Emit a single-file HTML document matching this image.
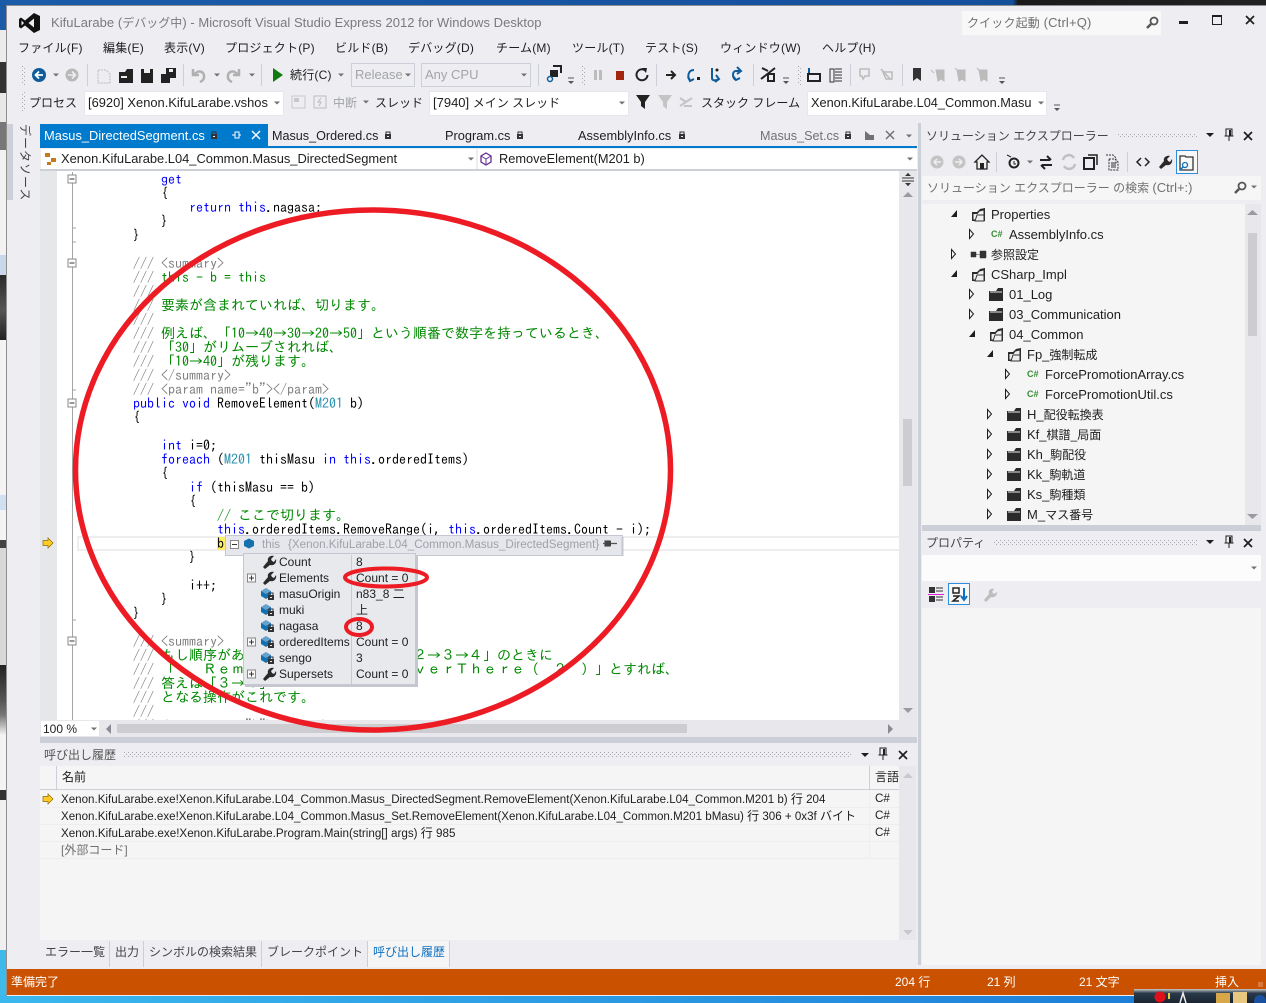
<!DOCTYPE html>
<html lang="ja"><head><meta charset="utf-8"><title>Visual Studio</title>
<style>
html,body{margin:0;padding:0}
body{width:1266px;height:1003px;overflow:hidden;position:relative;background:#eeeef2;font-family:"Liberation Sans","Noto Sans CJK JP",sans-serif;font-size:12px;color:#1e1e1e}
.b{position:absolute}
.t{position:absolute;white-space:nowrap;line-height:16px;font-size:12px}
.l{font-size:13px}
.l i{font-size:12px;font-style:normal}
.m{font-size:12.8px}
.m i{font-size:12px;font-style:normal}
.s{font-size:11.65px}
.s i{font-size:12px;font-style:normal}
.n{letter-spacing:.2px}
.g{color:#717171}
.d{color:#a2a4a5}
.w{color:#fff}
pre{position:absolute;left:77px;top:172px;margin:0;font:14px/14px "IPAGothic","Liberation Mono",monospace;color:#000;height:548px;width:822px;overflow:hidden}
pre b{font-weight:normal;color:#00f}
pre u{text-decoration:none;color:#080}
pre s{text-decoration:none;color:#808080}
pre em{font-style:normal;color:#2b91af}
svg{position:absolute;left:0;top:0}
.v{position:absolute;left:18px;top:124px;writing-mode:vertical-rl;text-orientation:sideways;line-height:14px;font-size:12px;letter-spacing:1px;color:#444}
.c{font:bold 9px/12px 'Liberation Sans',sans-serif;color:#388a34}
</style></head><body>
<!-- desktop -->
<div class="b" style="left:0;top:0;width:1266px;height:5px;background:linear-gradient(90deg,#1a5ca8,#144f9c 80%,#1a1a1a 80.4%,#222)"></div>
<div class="b" style="left:0;top:0;width:6px;height:1003px;background:linear-gradient(180deg,#1b5aa6 0,#1b5aa6 30px,#ececec 30px,#ececec 62px,#333 62px,#333 93px,#e8e8e8 93px,#e8e8e8 122px,#777 122px,#777 150px,#f2f2f2 150px,#f2f2f2 255px,#c8d8ea 255px,#c8d8ea 275px,#2a2a2a 275px,#555 310px,#222 340px,#f4f4f4 340px,#f4f4f4 495px,#d0e0f0 495px,#d0e0f0 510px,#f4f4f4 510px,#f4f4f4 540px,#444 540px,#444 548px,#d8d8d8 548px,#d8d8d8 665px,#222 665px,#555 700px,#777 715px,#f4f4f4 735px,#f4f4f4 790px,#333 790px,#333 800px,#f0f0f0 800px,#f0f0f0 950px,#3fb8ea 950px,#3fb8ea 1003px)"></div>
<div class="b" style="left:0;top:995px;width:1266px;height:8px;background:linear-gradient(90deg,#3ab8ee,#1a78d6)"></div>
<!-- window -->
<div class="b" style="left:6px;top:5px;width:1260px;height:991px;background:#eeeef2;border-left:1px solid #8f8f8f;border-top:1px solid #8f8f8f;box-sizing:border-box"></div>
<!-- title -->
<div class="t l g" style="left:51px;top:15px;color:#7a7a7a;letter-spacing:.03px"><span>KifuLarabe (<i>デバッグ中</i>) - Microsoft Visual Studio Express 2012 for Windows Desktop</span></div>
<div class="b" style="left:962px;top:11px;width:199px;height:24px;background:#f8f8f9"></div>
<div class="t l g" style="left:967px;top:15px;letter-spacing:.15px"><i>クイック起動</i> (Ctrl+Q)</div>
<!-- menu -->
<div class="t n" style="left:18px;top:40px">ファイル(F)</div><div class="t n" style="left:103px;top:40px">編集(E)</div><div class="t n" style="left:164px;top:40px">表示(V)</div><div class="t n" style="left:225px;top:40px">プロジェクト(P)</div><div class="t n" style="left:335px;top:40px">ビルド(B)</div><div class="t n" style="left:408px;top:40px">デバッグ(D)</div><div class="t n" style="left:496px;top:40px">チーム(M)</div><div class="t n" style="left:572px;top:40px">ツール(T)</div><div class="t n" style="left:645px;top:40px">テスト(S)</div><div class="t n" style="left:720px;top:40px">ウィンドウ(W)</div><div class="t n" style="left:822px;top:40px">ヘルプ(H)</div>
<!-- toolbar combos -->
<div class="t n" style="left:290px;top:67px">続行(C)</div>
<div class="b" style="left:351px;top:63px;width:62px;height:22px;border:1px solid #ccced8"></div><div class="t l d" style="left:355px;top:67px">Release</div>
<div class="b" style="left:421px;top:63px;width:108px;height:22px;border:1px solid #ccced8"></div><div class="t l d" style="left:425px;top:67px">Any CPU</div>
<div class="t" style="left:29px;top:95px">プロセス</div>
<div class="b" style="left:84px;top:91px;width:198px;height:23px;background:#fff;border:1px solid #e6e6ec"></div><div class="t m" style="left:88px;top:95px;font-size:12.9px">[6920] Xenon.KifuLarabe.vshos</div>
<div class="t d" style="left:333px;top:95px">中断</div><div class="t" style="left:375px;top:95px">スレッド</div>
<div class="b" style="left:429px;top:91px;width:198px;height:23px;background:#fff;border:1px solid #e6e6ec"></div><div class="t l" style="left:433px;top:95px">[7940] <i>メイン スレッド</i></div>
<div class="t" style="left:701px;top:95px">スタック フレーム</div>
<div class="b" style="left:807px;top:91px;width:238px;height:23px;background:#fff;border:1px solid #e6e6ec"></div><div class="t" style="left:811px;top:95px;font-size:12.75px">Xenon.KifuLarabe.L04_Common.Masu</div>
<!-- editor tabs -->
<div class="b" style="left:7px;top:124px;width:6px;height:76px;background:#ccced8"></div>
<div class="v">データソース</div>
<div class="b" style="left:40px;top:124px;width:228px;height:23px;background:#007acc"></div>
<div class="b" style="left:40px;top:146px;width:877px;height:2px;background:#007acc"></div>
<div class="t m w" style="left:44px;top:128px;font-size:12.87px">Masus_DirectedSegment.cs</div>
<div class="t m" style="left:272px;top:128px;font-size:12.6px">Masus_Ordered.cs</div>
<div class="t m" style="left:445px;top:128px">Program.cs</div>
<div class="t m" style="left:578px;top:128px">AssemblyInfo.cs</div>
<div class="t m g" style="left:760px;top:128px;font-size:12.6px">Masus_Set.cs</div>
<!-- nav bar -->
<div class="b" style="left:41px;top:149px;width:435px;height:20px;background:#fff"></div>
<div class="b" style="left:478px;top:149px;width:439px;height:20px;background:#fff"></div>
<div class="b" style="left:40px;top:169px;width:877px;height:2px;background:#ccced8"></div>
<div class="t m" style="left:61px;top:151px;font-size:12.9px">Xenon.KifuLarabe.L04_Common.Masus_DirectedSegment</div>
<div class="t m" style="left:499px;top:151px">RemoveElement(M201 b)</div>
<!-- editor -->
<div class="b" style="left:40px;top:171px;width:859px;height:549px;background:#fff"></div>
<div class="b" style="left:40px;top:171px;width:17px;height:549px;background:#e6e7e8"></div>
<div class="b" style="left:72px;top:172px;width:1px;height:548px;background:#a5a5a5"></div>
<div class="b" style="left:77px;top:536px;width:820px;height:11px;border:2px solid #eeeeee"></div>
<div class="b" style="left:217px;top:537px;width:8px;height:13px;background:#ffee62"></div>
<pre>            <b>get</b>
            {
                <b>return</b> <b>this</b>.nagasa;
            }
        }

        <s>///</s> <s>&lt;summary&gt;</s>
        <s>///</s> <u>this - b = this</u>
        <s>///</s>
        <s>///</s> <u>要素が含まれていれば、切ります。</u>
        <s>///</s>
        <s>///</s> <u>例えば、「10→40→30→20→50」という順番で数字を持っているとき、</u>
        <s>///</s> <u>「30」がリムーブされれば、</u>
        <s>///</s> <u>「10→40」が残ります。</u>
        <s>///</s> <s>&lt;/summary&gt;</s>
        <s>///</s> <s>&lt;param name="b"&gt;&lt;/param&gt;</s>
        <b>public</b> <b>void</b> RemoveElement(<em>M201</em> b)
        {

            <b>int</b> i=0;
            <b>foreach</b> (<em>M201</em> thisMasu <b>in</b> <b>this</b>.orderedItems)
            {
                <b>if</b> (thisMasu == b)
                {
                    <u>// ここで切ります。</u>
                    <b>this</b>.orderedItems.RemoveRange(i, <b>this</b>.orderedItems.Count - i);
                    b
                }

                i++;
            }
        }

        <s>///</s> <s>&lt;summary&gt;</s>
        <s>///</s> <u>もし順序があ　　　　　　　　　　　　２→３→４」のときに</u>
        <s>///</s> <u>「　　Ｒｅｍ　　　　　　　　　　　　ｖｅｒＴｈｅｒｅ（　２　）」とすれば、</u>
        <s>///</s> <u>答えは「３→４」</u>
        <s>///</s> <u>となる操作がこれです。</u>
        <s>///</s>
        <s>///</s> <s>&lt;param name="b"&gt;&lt;/param&gt;</s></pre>
<!-- editor scrollbars -->
<div class="b" style="left:899px;top:171px;width:18px;height:549px;background:#e8e8ec"></div>
<div class="b" style="left:903px;top:419px;width:9px;height:67px;background:#cdcdd1"></div>
<div class="b" style="left:40px;top:720px;width:877px;height:17px;background:#e8e8ec"></div>
<div class="b" style="left:41px;top:721px;width:58px;height:15px;background:#fff"></div>
<div class="t" style="left:43px;top:721px">100 %</div>
<div class="b" style="left:117px;top:724px;width:570px;height:9px;background:#cdcdd1"></div>
<div class="b" style="left:40px;top:737px;width:877px;height:6px;background:#ccced8"></div>
<div class="b" style="left:918px;top:123px;width:3px;height:842px;background:#ccced8"></div>
<!-- call stack -->
<div class="t g" style="left:44px;top:747px;color:#555">呼び出し履歴</div>
<div class="b" style="left:40px;top:766px;width:859px;height:174px;background:#f5f5f5"></div>
<div class="b" style="left:899px;top:766px;width:17px;height:174px;background:#e8e8ec"></div>
<div class="b" style="left:40px;top:789px;width:859px;height:1px;background:#ccced8"></div>
<div class="b" style="left:56px;top:766px;width:1px;height:23px;background:#ccced8"></div>
<div class="b" style="left:869px;top:766px;width:1px;height:23px;background:#ccced8"></div>
<div class="b" style="left:40px;top:807px;width:859px;height:1px;background:#eee"></div>
<div class="b" style="left:40px;top:824px;width:859px;height:1px;background:#eee"></div>
<div class="b" style="left:40px;top:841px;width:859px;height:1px;background:#eee"></div>
<div class="b" style="left:40px;top:858px;width:859px;height:1px;background:#eee"></div>
<div class="b" style="left:869px;top:790px;width:1px;height:68px;background:#eee"></div>
<div class="t" style="left:62px;top:769px">名前</div><div class="t" style="left:875px;top:769px">言語</div>
<div class="t s" style="left:61px;top:791px;font-size:11.58px">Xenon.KifuLarabe.exe!Xenon.KifuLarabe.L04_Common.Masus_DirectedSegment.RemoveElement(Xenon.KifuLarabe.L04_Common.M201 b) <i>行</i> 204</div>
<div class="t s" style="left:61px;top:808px;font-size:11.58px">Xenon.KifuLarabe.exe!Xenon.KifuLarabe.L04_Common.Masus_Set.RemoveElement(Xenon.KifuLarabe.L04_Common.M201 bMasu) <i>行</i> 306 + 0x3f <i>バイト</i></div>
<div class="t s" style="left:61px;top:825px">Xenon.KifuLarabe.exe!Xenon.KifuLarabe.Program.Main(string[] args) <i>行</i> 985</div>
<div class="t g" style="left:61px;top:842px">[外部コード]</div>
<div class="t s" style="left:875px;top:791px">C#</div><div class="t s" style="left:875px;top:808px">C#</div><div class="t s" style="left:875px;top:825px">C#</div>
<!-- bottom tabs -->
<div class="b" style="left:368px;top:941px;width:81px;height:26px;background:#f5f5f5"></div>
<div class="t" style="left:45px;top:944px;color:#444">エラー一覧</div><div class="t" style="left:115px;top:944px;color:#444">出力</div><div class="t" style="left:149px;top:944px;color:#444">シンボルの検索結果</div><div class="t" style="left:267px;top:944px;color:#444">ブレークポイント</div><div class="t" style="left:373px;top:944px;color:#0e70c0">呼び出し履歴</div>
<div class="b" style="left:109px;top:941px;width:1px;height:26px;background:#ccced8"></div><div class="b" style="left:143px;top:941px;width:1px;height:26px;background:#ccced8"></div><div class="b" style="left:261px;top:941px;width:1px;height:26px;background:#ccced8"></div><div class="b" style="left:367px;top:941px;width:1px;height:26px;background:#ccced8"></div><div class="b" style="left:449px;top:941px;width:1px;height:26px;background:#ccced8"></div>
<!-- solution explorer -->
<div class="t" style="left:926px;top:128px;color:#444">ソリューション エクスプローラー</div>
<div class="b" style="left:1176px;top:150px;width:20px;height:22px;border:1px solid #2d8fdc;background:#f8f8f9"></div>
<div class="b" style="left:922px;top:176px;width:339px;height:24px;background:#f6f6f6"></div>
<div class="t g" style="left:927px;top:180px">ソリューション エクスプローラー の検索 <span class="l">(Ctrl+:)</span></div>
<div class="b" style="left:922px;top:204px;width:323px;height:321px;background:#f5f5f5"></div>
<div class="b" style="left:1245px;top:204px;width:16px;height:321px;background:#e8e8ec"></div>
<div class="b" style="left:1248px;top:233px;width:9px;height:103px;background:#cdcdd1"></div>
<div class="b" style="left:922px;top:525px;width:339px;height:6px;background:#ccced8"></div>
<div class="t l" style="left:991px;top:207px">Properties</div>
<div class="t l" style="left:1009px;top:227px">AssemblyInfo.cs</div>
<div class="t" style="left:991px;top:247px">参照設定</div>
<div class="t l" style="left:991px;top:267px">CSharp_Impl</div>
<div class="t l" style="left:1009px;top:287px">01_Log</div>
<div class="t l" style="left:1009px;top:307px">03_Communication</div>
<div class="t l" style="left:1009px;top:327px">04_Common</div>
<div class="t l" style="left:1027px;top:347px">Fp_<i>強制転成</i></div>
<div class="t l" style="left:1045px;top:367px">ForcePromotionArray.cs</div>
<div class="t l" style="left:1045px;top:387px">ForcePromotionUtil.cs</div>
<div class="t l" style="left:1027px;top:407px">H_<i>配役転換表</i></div>
<div class="t l" style="left:1027px;top:427px">Kf_<i>棋譜_局面</i></div>
<div class="t l" style="left:1027px;top:447px">Kh_<i>駒配役</i></div>
<div class="t l" style="left:1027px;top:467px">Kk_<i>駒軌道</i></div>
<div class="t l" style="left:1027px;top:487px">Ks_<i>駒種類</i></div>
<div class="t l" style="left:1027px;top:507px">M_<i>マス番号</i></div>
<div class="t c" style="left:991px;top:228px">C#</div>
<div class="t c" style="left:1027px;top:368px">C#</div>
<div class="t c" style="left:1027px;top:388px">C#</div>
<!-- properties -->
<div class="t" style="left:926px;top:535px;color:#444">プロパティ</div>
<div class="b" style="left:922px;top:555px;width:339px;height:26px;background:#fcfcfc"></div>
<div class="b" style="left:922px;top:608px;width:339px;height:357px;background:#f5f5f5"></div>
<div class="b" style="left:948px;top:583px;width:22px;height:22px;border:1px solid #2d8fdc;box-sizing:border-box;background:#f8f8f9"></div>
<!-- status -->
<div class="b" style="left:7px;top:969px;width:1259px;height:26px;background:#ca5100"></div>
<div class="t w" style="left:11px;top:974px">準備完了</div>
<div class="t w" style="left:895px;top:974px">204 行</div><div class="t w" style="left:987px;top:974px">21 列</div><div class="t w" style="left:1079px;top:974px">21 文字</div><div class="t w" style="left:1215px;top:974px">挿入</div>
<div class="b" style="left:1134px;top:989px;width:132px;height:14px;background:linear-gradient(#c8c8c8,#2a3a4a 30%,#1a2430)"></div>
<!-- icons -->
<svg width="1266" height="1003" viewBox="0 0 1266 1003" xmlns="http://www.w3.org/2000/svg">
<defs>
<pattern id="dots" width="4" height="4" patternUnits="userSpaceOnUse"><rect width="1" height="1" fill="#a8a8b0"/><rect x="2" y="2" width="1" height="1" fill="#a8a8b0"/></pattern>
<symbol id="fc" overflow="visible"><path d="M0 3h7l2-3h5v13H0z" fill="#2b2b2b"/><path d="M1 4h12" stroke="#e8e8e8" fill="none"/></symbol>
<symbol id="fo" overflow="visible"><path d="M0 4h5l3-3 5-1v13H0z" fill="#2b2b2b"/><path d="M1.500 6h4l2-2.500 4-1V11.500h-10z" fill="#eeeeee"/><path d="M5 7h7v6H3z" fill="#eeeeee" stroke="#333"/></symbol>
<symbol id="ex" overflow="visible"><path d="M.5-4.500L4.500 0 .5 4.500z" fill="#f5f5f5" stroke="#1e1e1e"/></symbol>
<symbol id="ec" overflow="visible"><path d="M6-4V3H0z" fill="#1e1e1e"/></symbol>
<symbol id="dn" overflow="visible"><path d="M-3-1.500H3L0 1.500z" fill="#717171"/></symbol>
<symbol id="dk" overflow="visible"><path d="M-4-2H4L0 2z" fill="#1e1e1e"/></symbol>
<symbol id="of" overflow="visible"><path d="M-3-3H3" stroke="#555" fill="none"/><path d="M-3 0H3L0 3z" fill="#555"/></symbol>
<symbol id="lk" overflow="visible"><rect x="-3" y="-1" width="6" height="5" fill="#333"/><path d="M-2-1v-2h4v2" fill="none" stroke="#333"/><rect x="-1" y="1" width="2" height="1" fill="#eee"/></symbol>
<symbol id="pin" overflow="visible"><path d="M-3-6H3V1H-3zM-4.500 1H4.500M0 1V6" stroke="#1e1e1e" fill="none"/><rect x="0" y="-5" width="2" height="6" fill="#1e1e1e"/></symbol>
<symbol id="cl" overflow="visible"><path d="M-4-4L4 4M4-4L-4 4" stroke="#1e1e1e" stroke-width="1.700" fill="none"/></symbol>
<symbol id="gl" overflow="visible"><circle cx="2" cy="-2" r="3.500" fill="none" stroke="#555" stroke-width="1.800"/><path d="M-1 1L-5 5" stroke="#555" stroke-width="2.500"/></symbol>
<symbol id="wr" overflow="visible"><path d="M-6 5L-1-1C-2-4 1-7 5-6L2-3l1 2 2 1 2-3C8 1 5 4 1 3L-4 7z" fill="#2a2a2a"/></symbol>
<symbol id="cu" overflow="visible"><path d="M-6-3L-1-6 4-3V2L-1 5-6 2z" fill="#1570b0"/><path d="M-6-3L-1-6 4-3-1 0z" fill="#ffffff" opacity=".35"/><rect x="1" y="1" width="6" height="5" fill="#333"/><rect x="3" y="3" width="2" height="1" fill="#eee"/><path d="M2 1V-1H6V1" fill="none" stroke="#333"/></symbol>
<symbol id="pl" overflow="visible"><rect x=".5" y=".5" width="8" height="8" fill="#fafafa" stroke="#888"/><path d="M2 4.500h5M4.500 2v5" stroke="#333" fill="none"/></symbol>
<symbol id="mn" overflow="visible"><rect x=".5" y=".5" width="8" height="8" fill="#fff" stroke="#888"/><path d="M2 4.500h5" stroke="#333" fill="none"/></symbol>
<symbol id="ya" overflow="visible"><path d="M-5-2.500H0V-5L5 0 0 5V2.500H-5z" fill="#ffcc22" stroke="#8a6a10" stroke-width=".7"/></symbol>
</defs>
<!-- logo -->
<path fill-rule="evenodd" d="M34 13L40 16V30L34 33 25 25.500 21 28.500 19 27V19L21 17.500 25 20.500zM34 18.500L28.500 23 34 27.500zM21.500 20.500V25.500L24 23z" fill="#111"/>
<!-- window buttons -->
<rect x="1179" y="21" width="9" height="3" fill="#1e1e1e"/><rect x="1212.500" y="15.500" width="9" height="9" fill="none" stroke="#1e1e1e"/><rect x="1212" y="15" width="10" height="2" fill="#1e1e1e"/><use href="#cl" x="1250" y="20"/><use href="#gl" x="1152" y="23"/>
<!-- grippers -->
<rect x="21" y="65" width="4" height="20" fill="url(#dots)"/><rect x="21" y="92" width="4" height="20" fill="url(#dots)"/><rect x="581" y="65" width="4" height="20" fill="url(#dots)"/><rect x="797" y="65" width="4" height="20" fill="url(#dots)"/>
<!-- seps -->
<path d="M87.500 64v22M183.500 64v22M261.500 64v22M538.500 64v22M656.500 64v22M753.500 64v22M850.500 64v22M902.500 64v22M996.500 152v20M1127.500 152v20" stroke="#ccced8" fill="none"/>
<!-- row1 -->
<circle cx="39" cy="75" r="7" fill="#0e5c9c"/><path d="M43 75H36M39 71.500L35.500 75 39 78.500" stroke="#fff" stroke-width="1.800" fill="none"/><use href="#dn" x="56" y="75"/>
<circle cx="72" cy="75" r="6.500" fill="#b8b8b8"/><path d="M68 75H75M72 71.500L75.500 75 72 78.500" stroke="#eee" stroke-width="1.600" fill="none"/>
<path d="M98 70h8l4 4v9H98z" fill="none" stroke="#bcbcbc" stroke-dasharray="2 1"/>
<path d="M119 72h6l2-3h6v14h-14z" fill="#222"/><path d="M121 76h6v2h-6z" fill="#eee"/>
<path d="M141 69h12v14h-12z" fill="#222"/><rect x="144" y="69" width="6" height="4" fill="#eee"/>
<path d="M161 74h9v9h-9z" fill="#222"/><path d="M166 68h10v10h-6v-4h-4z" fill="#222"/><rect x="169" y="69" width="4" height="3" fill="#eee"/>
<path d="M193 69v6h6M194 75C198 69 205 71 204 78 203.500 80 202 81 200 82" stroke="#b0b0b0" stroke-width="2.500" fill="none"/><use href="#dn" x="217" y="75"/>
<path d="M239 69v6h-6M238 75C234 69 227 71 228 78 228.500 80 230 81 232 82" stroke="#b0b0b0" stroke-width="2.500" fill="none"/><use href="#dn" x="252" y="75"/>
<path d="M273 68L283 75 273 82z" fill="#107c10"/><use href="#dn" x="341" y="75"/>
<use href="#dn" x="408" y="75"/><use href="#dn" x="524" y="75"/>
<path d="M550 70h8v7h-8z" fill="#222"/><path d="M553 66h8v7" fill="none" stroke="#222" stroke-width="2"/><circle cx="550" cy="79" r="2.500" fill="none" stroke="#0e5c9c" stroke-width="1.500"/><use href="#of" x="571" y="81"/>
<path d="M594 70h3v10h-3zM599 70h3v10h-3z" fill="#bcbcbc"/>
<rect x="616" y="71" width="8" height="9" fill="#a1260d"/>
<path d="M646 71A5.500 5.500 0 1 0 647.500 75" stroke="#222" stroke-width="2" fill="none"/><path d="M642 68l5 0 -1 5z" fill="#222"/>
<path d="M666 75h9M671 71l4 4-4 4" stroke="#222" stroke-width="2" fill="none"/>
<path d="M694 70C688 70 687 77 690 80M688 77l2 4 4-2" stroke="#0e5c9c" stroke-width="2" fill="none"/><rect x="697" y="77" width="3" height="3" fill="#222"/>
<path d="M712 68V78C712 81 716 81 719 79M716 75l3 4-4 3" stroke="#0e5c9c" stroke-width="2" fill="none"/><circle cx="717" cy="70" r="1.500" fill="#222"/>
<path d="M741 71H736C732 71 732 78 736 80M733 76l3 4 4-2M737 67l4 4-4 3" stroke="#0e5c9c" stroke-width="2" fill="none"/>
<path d="M762 68l6 3M761 79L775 68" stroke="#222" stroke-width="2" fill="none"/><rect x="768" y="74" width="6" height="7" fill="none" stroke="#222" stroke-width="2"/><use href="#of" x="786" y="81"/>
<rect x="808" y="74" width="12" height="7" fill="none" stroke="#222" stroke-width="2"/><path d="M809 68v5" stroke="#0e5c9c" stroke-width="2"/><path d="M830 69h4v13h-4zM835 69h7M835 72h7M835 75h7M835 78h7M835 81h7" stroke="#333" fill="none"/>
<path d="M860 69h9v7h-4l-2 3-1-3h-2z" fill="none" stroke="#bbb" stroke-width="1.500"/><path d="M881 69l10 11M883 72h9v7h-6z" fill="none" stroke="#bbb" stroke-width="1.500"/>
<path d="M913 68h8v13l-4-3-4 3z" fill="#333"/>
<path d="M936 70h8v11l-3-2-3 2zM934 73l-3-3" fill="#bbb" stroke="#bbb"/><path d="M957 70h8v11l-3-2-3 2zM955 68l3 3" fill="#bbb" stroke="#bbb"/><path d="M979 70h8v11l-3-2-3 2zM977 68l10 12" fill="#bbb" stroke="#bbb"/><use href="#of" x="1002" y="81"/>
<!-- row2 -->
<use href="#dn" x="277" y="103"/><use href="#dn" x="622" y="103"/><use href="#dn" x="1041" y="103"/><use href="#dn" x="366" y="102"/><use href="#of" x="1057" y="108"/>
<rect x="292" y="96" width="13" height="12" fill="none" stroke="#c8c8c8"/><path d="M294 98h5v4h-5z" fill="#c8c8c8"/>
<rect x="314" y="96" width="12" height="12" fill="none" stroke="#bcbcbc"/><path d="M321 98l-3 4h3l-2 4" stroke="#bcbcbc" fill="none"/>
<path d="M636 95h14l-5 7v7l-4-3v-4z" fill="#222"/>
<path d="M658 95h14l-5 7v7l-4-3v-4z" fill="#c4c4c4"/>
<path d="M680 98l6 4 6-4M680 106l12-8M684 106h8" stroke="#c4c4c4" stroke-width="2" fill="none"/>
<!-- tabs icons -->
<use href="#lk" x="214" y="135"/><path d="M232 135h3M235 132v6h4v-6zM239 135h2" stroke="#fff" fill="none"/><path d="M252 131l8 8M260 131l-8 8" stroke="#fff" stroke-width="1.500" fill="none"/>
<use href="#lk" x="388" y="135"/><use href="#lk" x="520" y="135"/><use href="#lk" x="682" y="135"/><use href="#lk" x="848" y="135"/>
<path d="M865 131l5 4h4v5h-9z" fill="#717171"/><path d="M886 131l8 8M894 131l-8 8" stroke="#717171" stroke-width="1.500" fill="none"/><use href="#dn" x="909" y="136"/>
<rect x="1118" y="133" width="79" height="5" fill="url(#dots)"/><use href="#dk" x="1210" y="135"/><use href="#pin" x="1229" y="135"/><use href="#cl" x="1248" y="136"/>
<!-- nav icons -->
<path d="M45 153h5v4h-5zM51 158h5v4h-5zM47 162h4v3h-4z" fill="#c27d1a"/><path d="M486 153l5 3v6l-5 3-5-3v-6z" fill="none" stroke="#652d90" stroke-width="1.300"/><path d="M486 159l5-3M486 159l-5-3M486 159v5" stroke="#652d90"/>
<use href="#dn" x="471" y="159"/><use href="#dn" x="910" y="159"/>
<!-- outlining -->
<g><use href="#mn" x="67.500" y="174.500"/><use href="#mn" x="67.500" y="258.500"/><use href="#mn" x="67.500" y="398.500"/><use href="#mn" x="67.500" y="636.500"/></g>
<path d="M72 228h4M72 242h4M72 390h4M72 620h4" stroke="#a5a5a5" fill="none"/>
<use href="#ya" x="48" y="543"/><use href="#ya" x="48" y="799"/>
<!-- editor scroll icons -->
<path d="M902 178h12M902 181h12M908 173v3M908 183v3" stroke="#333" fill="none"/><path d="M905 176h6l-3-3zM905 183h6l-3 3z" fill="#333"/>
<path d="M903 197h10l-5-5zM903 708h10l-5 5z" fill="#9a9aa2"/>
<path d="M111 724v10l-5-5zM888 724v10l5-5z" fill="#8a8a96"/><use href="#dn" x="94" y="729"/>
<!-- call stack icons -->
<rect x="124" y="752" width="727" height="5" fill="url(#dots)"/><use href="#dk" x="865" y="755"/><use href="#pin" x="883" y="754"/><use href="#cl" x="903" y="755"/>
<path d="M903 778h10l-5-5zM903 930h10l-5 5z" fill="#c8c8d0"/>
<!-- solution toolbar -->
<circle cx="937" cy="162" r="6.500" fill="#c4c4c4"/><path d="M941 162H934M937 159l-3 3 3 3" stroke="#eee" stroke-width="1.500" fill="none"/>
<circle cx="959" cy="162" r="6.500" fill="#c4c4c4"/><path d="M955 162H962M959 159l3 3-3 3" stroke="#eee" stroke-width="1.500" fill="none"/>
<path d="M975 162l7-7 7 7h-2v7h-10v-7z" fill="#eee" stroke="#222" stroke-width="1.300"/><rect x="980" y="163" width="4" height="6" fill="#222"/>
<circle cx="1014" cy="163" r="4.500" fill="none" stroke="#222" stroke-width="2"/><path d="M1014 161v3h2M1007 155l4 2" stroke="#222" fill="none"/><use href="#dn" x="1030" y="162"/>
<path d="M1040 160h10M1047 156l4 4M1052 165h-10M1045 169l-4-4" stroke="#222" stroke-width="2" fill="none"/>
<path d="M1063 160a6 6 0 0 1 11-2M1075 164a6 6 0 0 1-11 2" stroke="#c0c0c0" stroke-width="2.500" fill="none"/>
<rect x="1084" y="158" width="10" height="11" fill="none" stroke="#222" stroke-width="2"/><path d="M1088 155h9v10" stroke="#222" fill="none" stroke-width="1.500"/>
<path d="M1106 155h7l3 3v5h-2M1109 159h6l3 3v8h-9z" fill="none" stroke="#333" stroke-dasharray="2 1"/><path d="M1111 163h5M1111 165h5M1111 167h5" stroke="#333"/>
<path d="M1141 158l-4 4 4 4M1145 158l4 4-4 4" stroke="#222" stroke-width="1.500" fill="none"/>
<use href="#wr" x="1165" y="162"/>
<path d="M1180 156h5l1 1h7v13h-13z" fill="none" stroke="#333" stroke-width="1.300"/><circle cx="1185" cy="165" r="2.500" fill="none" stroke="#0e70c0" stroke-width="1.300"/><path d="M1183 167l-3 3" stroke="#0e70c0" stroke-width="1.500"/>
<use href="#gl" x="1240" y="188"/><use href="#dn" x="1254" y="187"/>
<!-- tree -->
<path d="M1247 215h11l-5.500-5zM1247 514h11l-5.500 5z" fill="#9a9aa2"/>
<use href="#ec" x="951" y="214"/><use href="#fo" x="972" y="208"/>
<use href="#ex" x="969" y="234"/>
<use href="#ex" x="951" y="254"/><path d="M971 252h5v5h-5zM980 251h6v7h-6zM976 254.500h4" fill="#333" stroke="#333" stroke-width=".5"/>
<use href="#ec" x="951" y="274"/><use href="#fo" x="972" y="268"/>
<use href="#ex" x="969" y="294"/><use href="#fc" x="989" y="288"/>
<use href="#ex" x="969" y="314"/><use href="#fc" x="989" y="308"/>
<use href="#ec" x="969" y="334"/><use href="#fo" x="990" y="328"/>
<use href="#ec" x="987" y="354"/><use href="#fo" x="1008" y="348"/>
<use href="#ex" x="1005" y="374"/><use href="#ex" x="1005" y="394"/>
<use href="#ex" x="987" y="414"/><use href="#fc" x="1007" y="408"/>
<use href="#ex" x="987" y="434"/><use href="#fc" x="1007" y="428"/>
<use href="#ex" x="987" y="454"/><use href="#fc" x="1007" y="448"/>
<use href="#ex" x="987" y="474"/><use href="#fc" x="1007" y="468"/>
<use href="#ex" x="987" y="494"/><use href="#fc" x="1007" y="488"/>
<use href="#ex" x="987" y="514"/><use href="#fc" x="1007" y="508"/>
<!-- properties icons -->
<rect x="994" y="540" width="203" height="5" fill="url(#dots)"/><use href="#dk" x="1210" y="542"/><use href="#pin" x="1229" y="542"/><use href="#cl" x="1248" y="543"/>
<use href="#dn" x="1254" y="568"/>
<rect x="929" y="587" width="6" height="6" fill="#333"/><rect x="929" y="596" width="6" height="6" fill="#333"/><path d="M936 588h7M936 591h7M936 597h7M936 600h7" stroke="#333" fill="none"/><path d="M928 594.500h16" stroke="#e020e0"/>
<path d="M953 588h6v5h-6zM953 596h6l-6 5h6" fill="none" stroke="#222" stroke-width="1.500"/><path d="M964 588v12M961 596l3 4 3-4" stroke="#0e70c0" stroke-width="2" fill="none"/>
<path d="M984 600l5-6c-1-3 1-6 5-5l-2 3 2 2 3-2c0 4-3 6-6 5l-5 5z" fill="#bdbdbd"/>
<rect x="1258" y="982" width="5" height="5" fill="#e8a070" opacity=".5"/>
<!-- popup -->
<rect x="225.500" y="535.500" width="397" height="20" fill="#e6e7ec" stroke="#c4c6d0"/>
<rect x="621.500" y="537" width="2" height="19" fill="#c4c6d0"/>
<use href="#mn" x="230" y="540"/>
<rect x="243.500" y="553.500" width="172" height="131" fill="#e8e9ed" stroke="#c4c6d0"/>
<rect x="416" y="555" width="2" height="131" fill="#c4c6d0"/><rect x="245" y="685" width="173" height="2" fill="#c4c6d0"/>
<path d="M351.500 555v129" stroke="#c8cad2"/>
<path d="M244 541l5-2.500 5 2.500v5l-5 2.500-5-2.500z" fill="#1570b0"/>
<path d="M605 541h5v5h-5zM610 543.500h7M605 543.500h-2" stroke="#555" stroke-width="1.200" fill="none"/><rect x="605" y="541" width="6" height="5" fill="#444"/>
<use href="#wr" x="269" y="562"/><use href="#wr" x="269" y="578"/><use href="#wr" x="269" y="674"/>
<use href="#cu" x="267" y="594"/><use href="#cu" x="267" y="610"/><use href="#cu" x="267" y="626"/><use href="#cu" x="267" y="642"/><use href="#cu" x="267" y="658"/>
<use href="#pl" x="247" y="573.500"/><use href="#pl" x="247" y="637.500"/><use href="#pl" x="247" y="669.500"/>
<!-- tray -->
<circle cx="1160" cy="997" r="5.500" fill="#e0101a"/><rect x="1168" y="993" width="2" height="6" fill="#e8d040"/><path d="M1180 1003l3-10 3 10" stroke="#eee" stroke-width="1.500" fill="none"/><rect x="1216" y="993" width="14" height="10" fill="#d8a848"/><rect x="1233" y="992" width="14" height="11" fill="#e8c880"/><circle cx="1260" cy="1001" r="6" fill="#1a50a0"/>
</svg>
<!-- popup text -->
<div class="t s" style="left:262px;top:537px;color:#a0a2a8">this</div><div class="t s" style="left:288px;top:537px;color:#a0a2a8">{Xenon.KifuLarabe.L04_Common.Masus_DirectedSegment}</div>
<div class="t" style="left:279px;top:554px">Count</div><div class="t" style="left:279px;top:570px">Elements</div><div class="t" style="left:279px;top:586px">masuOrigin</div><div class="t" style="left:279px;top:602px">muki</div><div class="t" style="left:279px;top:618px">nagasa</div><div class="t" style="left:279px;top:634px">orderedItems</div><div class="t" style="left:279px;top:650px">sengo</div><div class="t" style="left:279px;top:666px">Supersets</div>
<div class="t" style="left:356px;top:554px">8</div><div class="t" style="left:356px;top:570px">Count = 0</div><div class="t" style="left:356px;top:586px">n83_8 二</div><div class="t" style="left:356px;top:602px">上</div><div class="t" style="left:356px;top:618px">8</div><div class="t" style="left:356px;top:634px">Count = 0</div><div class="t" style="left:356px;top:650px">3</div><div class="t" style="left:356px;top:666px">Count = 0</div>
<!-- red annotations -->
<svg width="1266" height="1003" viewBox="0 0 1266 1003" xmlns="http://www.w3.org/2000/svg" style="pointer-events:none">
<ellipse cx="373" cy="470" rx="297.500" ry="260" fill="none" stroke="#ed1c24" stroke-width="5.500"/>
<ellipse cx="386" cy="577.500" rx="41" ry="9" fill="none" stroke="#ed1c24" stroke-width="4"/>
<ellipse cx="359" cy="627" rx="13" ry="8" fill="none" stroke="#ed1c24" stroke-width="4"/>
</svg>
</body></html>
